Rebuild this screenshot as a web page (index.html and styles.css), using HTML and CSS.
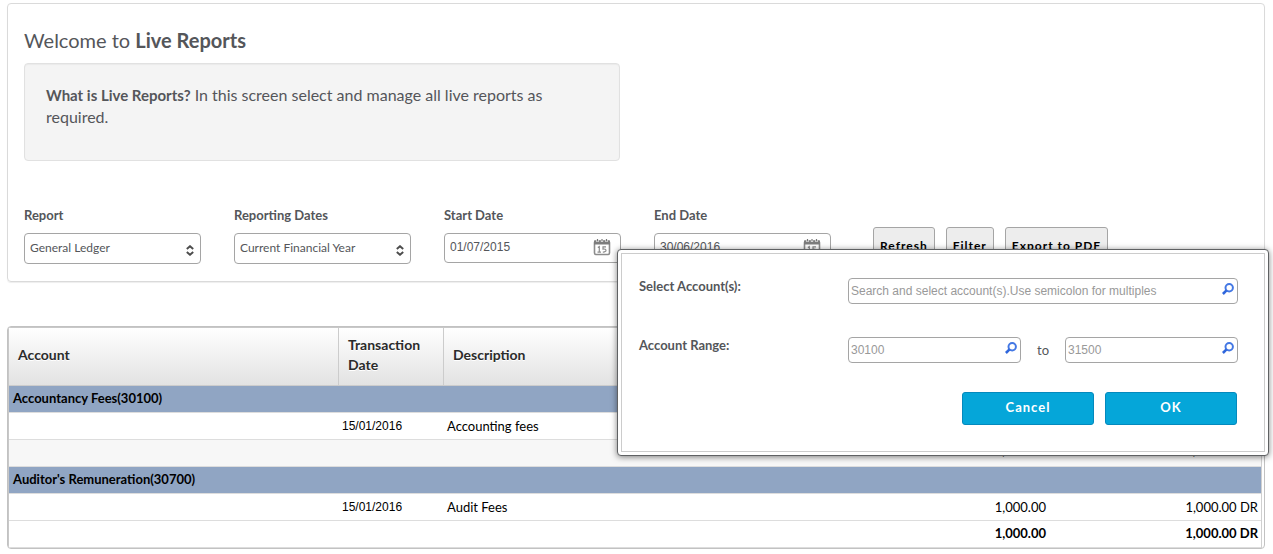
FILE: index.html
```html
<!DOCTYPE html>
<html lang="en">
<head>
<meta charset="utf-8">
<title>Live Reports</title>
<link rel="stylesheet" href="styles.css">
</head>
<body>
<svg class="defs" width="0" height="0" aria-hidden="true">
  <symbol id="calendar" viewBox="0 0 18 18">
    <rect x="1.500" y="3" width="15" height="13.500" rx="1.500" fill="#fff" stroke="#8c8c8c" stroke-width="1.600"/>
    <path d="M1 2.500h16v4H1z" fill="#7d7d7d"/>
    <path d="M4.500 1v3M9 1v3M13.500 1v3" stroke="#fff" stroke-width="2.200"/>
    <path d="M4.500 1v2.500M9 1v2.500M13.500 1v2.500" stroke="#777" stroke-width="1.200"/>
    <path d="M4.800 9.400l1.500-.9v5.700M4.500 14.200h3.500M13 8.800h-3v2.300c4-.8 4 3.300-.2 2.900" fill="none" stroke="#8c8c8c" stroke-width="1.200"/>
  </symbol>
  <symbol id="search" viewBox="0 0 12 12">
    <circle cx="7.200" cy="4.700" r="3.700" fill="none" stroke="#4478e4" stroke-width="2"/>
    <path d="M4.500 7.400L.9 11" stroke="#2f66dc" stroke-width="2.600"/>
  </symbol>
  <symbol id="updown" viewBox="0 0 8 11">
    <path d="M.8 4L4 1.200l3.200 2.800M.8 7L4 9.800l3.200-2.800" fill="none" stroke="#4c4c4c" stroke-width="1.900"/>
  </symbol>
</svg>
<main class="page">
  <section class="panel">
    <h1 class="title">Welcome to <strong>Live Reports</strong></h1>
    <p class="intro"><strong>What is Live Reports?</strong> In this screen select and manage all live reports as required.</p>
    <form class="filters">
      <div class="field">
        <label for="report">Report</label>
        <div class="control">
          <select id="report"><option>General Ledger</option></select>
          <svg class="arrows"><use href="#updown"/></svg>
        </div>
      </div>
      <div class="field">
        <label for="dates">Reporting Dates</label>
        <div class="control">
          <select id="dates"><option>Current Financial Year</option></select>
          <svg class="arrows"><use href="#updown"/></svg>
        </div>
      </div>
      <div class="field">
        <label for="start">Start Date</label>
        <div class="control">
          <input id="start" type="text" value="01/07/2015">
          <svg class="calendar"><use href="#calendar"/></svg>
        </div>
      </div>
      <div class="field">
        <label for="end">End Date</label>
        <div class="control">
          <input id="end" type="text" value="30/06/2016">
          <svg class="calendar"><use href="#calendar"/></svg>
        </div>
      </div>
      <div class="actions">
        <button type="button">Refresh</button>
        <button type="button">Filter</button>
        <button type="button">Export to PDF</button>
      </div>
    </form>
  </section>

  <div class="ledger-frame">
    <table class="ledger">
      <colgroup><col class="c-account"><col class="c-date"><col><col class="c-amount"><col class="c-balance"></colgroup>
      <thead>
        <tr><th>Account</th><th>Transaction Date</th><th>Description</th><th></th><th></th></tr>
      </thead>
      <tbody>
        <tr class="group"><td colspan="5">Accountancy Fees(30100)</td></tr>
        <tr><td></td><td class="date">15/01/2016</td><td>Accounting fees</td><td class="num"></td><td class="num"></td></tr>
        <tr class="total shaded"><td></td><td></td><td></td><td class="num">1,000.00</td><td class="num">1,000.00 DR</td></tr>
        <tr class="group"><td colspan="5">Auditor's Remuneration(30700)</td></tr>
        <tr><td></td><td class="date">15/01/2016</td><td>Audit Fees</td><td class="num">1,000.00</td><td class="num">1,000.00 DR</td></tr>
        <tr class="total"><td></td><td></td><td></td><td class="num">1,000.00</td><td class="num">1,000.00 DR</td></tr>
      </tbody>
    </table>
  </div>

  <div class="dialog" role="dialog" aria-label="Filter accounts">
    <form class="dialog-body">
      <div class="row">
        <label for="accounts">Select Account(s):</label>
        <div class="lookup">
          <input id="accounts" type="text" placeholder="Search and select account(s).Use semicolon for multiples">
          <svg class="search"><use href="#search"/></svg>
        </div>
      </div>
      <div class="row">
        <label for="from">Account Range:</label>
        <div class="lookup">
          <input id="from" type="text" placeholder="30100">
          <svg class="search"><use href="#search"/></svg>
        </div>
        <label class="to" for="until">to</label>
        <div class="lookup">
          <input id="until" type="text" placeholder="31500">
          <svg class="search"><use href="#search"/></svg>
        </div>
      </div>
      <div class="buttons">
        <button type="button">Cancel</button>
        <button type="button">OK</button>
      </div>
    </form>
  </div>
</main>
</body>
</html>
```
FILE: styles.css
```css
* { box-sizing: border-box; }

body {
  margin: 0;
  background: #fff;
  color: #54565a;
  font-family: Lato, "Liberation Sans", sans-serif;
  font-size: 13px;
}

input, select, button { font: inherit; color: inherit; margin: 0; }

.defs { position: absolute; }

.page {
  position: relative;
  padding: 3px 8px 5px 7px;
}

.panel {
  padding: 24px 16px 16px;
  border: 1px solid #dadada;
  border-radius: 4px;
  box-shadow: 0 1px 1px #eee;
}

.title {
  margin: 0 0 10px;
  font-size: 20px;
  line-height: 25px;
  font-weight: 400;
}

.intro {
  width: 596px;
  max-width: 100%;
  min-height: 98px;
  margin: 0 0 43px;
  padding: 20px 60px 20px 21px;
  border: 1px solid #e1e1e1;
  border-radius: 4px;
  background: #f4f4f4;
  box-shadow: inset 0 1px 1px #eaeaea;
  font-size: 16px;
  line-height: 22px;
}

.intro strong { font-size: 15px; }

.filters { display: flex; align-items: flex-start; gap: 33px; }

.field { width: 177px; }

.field label {
  display: block;
  margin-bottom: 7px;
  line-height: 22px;
  font-weight: 700;
}

.control { display: flex; position: relative; }

.control select,
.control input {
  appearance: none;
  width: 100%;
  height: 30px;
  padding: 0 30px 2px 5px;
  border: 1px solid #a5a5a5;
  border-radius: 4px;
  background: #fff;
}

.control select { height: 31px; font-size: 12px; }

.control input,
.ledger .date {
  font-family: "Liberation Sans", sans-serif;
  font-size: 12px;
}

.arrows { position: absolute; right: 7px; top: 12px; width: 8px; height: 11px; }
.calendar { position: absolute; right: 10px; top: 5px; width: 18px; height: 18px; }

.actions { display: flex; gap: 11px; padding: 23px 0 0 9px; }

.actions button {
  height: 38px;
  padding: 0 6px 2px;
  border: 1px solid #a5a5a5;
  border-radius: 3px;
  background: #ededed;
  color: #000;
  font-size: 12px;
  font-weight: 700;
  letter-spacing: 1px;
  white-space: nowrap;
}

.ledger-frame {
  margin-top: 44px;
  padding: 1px 2px 0 1px;
  border: 1px solid #c2c2c2;
  border-radius: 4px;
  box-shadow: inset 1px 1px 0 #c8c8c8;
}

.ledger {
  width: 100%;
  border-collapse: separate;
  border-spacing: 0;
  border-right: 1px solid #d0d0d0;
  table-layout: fixed;
  color: #000;
}

.c-account { width: 330px; }
.c-date { width: 105px; }
.c-amount { width: 250px; }
.c-balance { width: 212px; }

.ledger th {
  height: 58px;
  padding: 0 9px 3px;
  border-bottom: 1px solid #ccc;
  background: linear-gradient(#fff, #e2e2e2);
  color: #2b2b2b;
  text-align: left;
  font-size: 14px;
  line-height: 20px;
  text-shadow: 0 1px 0 #fff;
}

.ledger th:nth-child(-n+2) { border-right: 1px solid #ccc; }

.ledger td {
  height: 27px;
  padding: 0 3px;
  border-bottom: 1px solid #ddd;
  line-height: 20px;
}

.ledger .num { text-align: right; }
.ledger .group td { padding: 0 4px 3px; background: #90a5c3; font-weight: 700; }
.ledger .total td { padding-bottom: 2px; font-weight: 700; }
.ledger .shaded td { padding-bottom: 6px; background: #f7f7f7; }

.dialog {
  position: absolute;
  top: 249px;
  right: 4px;
  width: 652px;
  padding: 3px;
  border: 1px solid #5f6163;
  border-radius: 4px;
  background: #fff;
  box-shadow: 0 1px 6px rgba(0, 0, 0, .5);
}

.dialog-body {
  display: grid;
  gap: 33px;
  padding: 24px 26px 26px 17px;
  border: 1px solid #ccc;
}

.row { display: flex; align-items: flex-start; }

.row > label { width: 209px; line-height: 17px; font-weight: 700; }

.row .to { width: 44px; padding-top: 5px; text-align: center; font-weight: 400; }

.lookup { position: relative; flex: 1; }

.lookup input {
  display: block;
  width: 100%;
  height: 26px;
  padding: 0 26px 0 2px;
  border: 1px solid #a5a5a5;
  border-radius: 4px;
  background: #fff;
  font-family: "Liberation Sans", sans-serif;
  font-size: 12px;
}

.lookup input::placeholder { color: #999; opacity: 1; }

.search { position: absolute; right: 4px; top: 5px; width: 12px; height: 12px; }

.buttons {
  display: flex;
  justify-content: flex-end;
  gap: 11px;
  margin-top: -4px;
  padding-right: 1px;
}

.buttons button {
  width: 132px;
  height: 33px;
  padding: 0 0 3px;
  border: 1px solid #0489bd;
  border-radius: 3px;
  background: #05a6d9;
  color: #fff;
  font-weight: 700;
  letter-spacing: 1px;
}
```
